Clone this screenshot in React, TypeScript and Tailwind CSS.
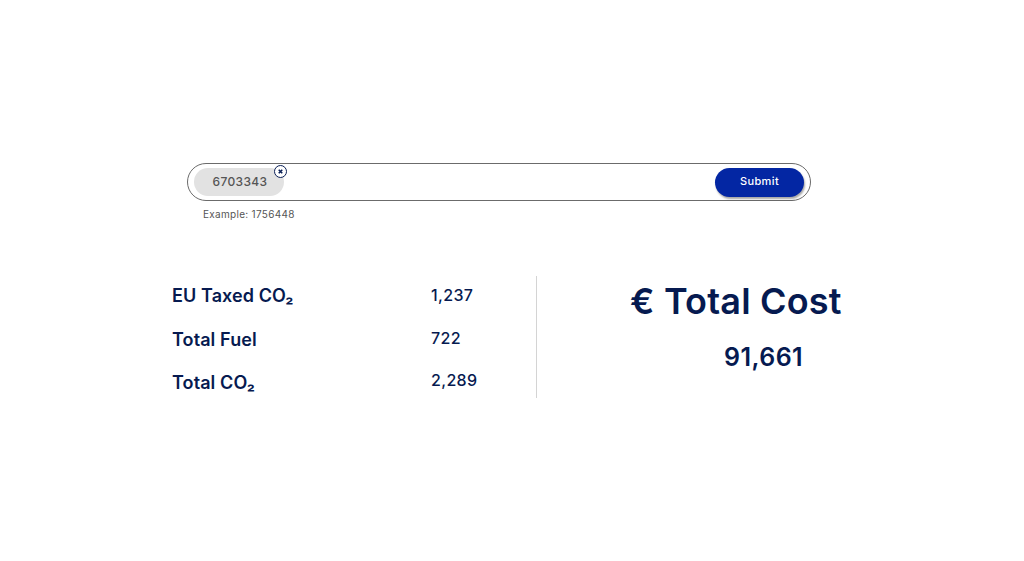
import React from 'react'

const labels = ['EU Taxed CO₂', 'Total Fuel', 'Total CO₂']
const values = ['1,237', '722', '2,289']

export default function App() {
  return (
    <div className="w-full h-[561px] bg-white overflow-hidden font-['Inter',sans-serif] text-[#061a50]">
      <div className="pt-[163px] pl-[187px]">
        <div className="w-[624px] h-[38px] rounded-full border border-[#6b6b6b] flex items-center justify-between pl-[6px] pr-[6px]">
          <div className="relative w-[90px] h-[28px] rounded-full bg-[#e2e2e2] flex items-center justify-center text-[12px] font-medium tracking-[0.35px] text-[#555555]">
            <span className="pl-[2px]">6703343</span>
            <span className="absolute -top-[3px] -right-[3px] w-[13px] h-[13px] rounded-full bg-white border-[1.5px] border-[#0a1f56] flex items-center justify-center">
              <svg width="7" height="7" viewBox="0 0 7 7">
                <path d="M1.75 1.75 5.25 5.25M5.25 1.75 1.75 5.25" stroke="#0a1f56" strokeWidth="1.6" />
              </svg>
            </span>
          </div>
          <button className="w-[89px] h-[29px] pb-[1px] rounded-full bg-[#0326a3] text-white text-[11px] font-medium tracking-[0.4px] shadow-[1px_2px_2px_rgba(0,0,0,0.35)]">
            Submit
          </button>
        </div>
        <div className="mt-[7px] ml-[16px] text-[10px] leading-[12px] tracking-[0.3px] text-[#555555]">Example: 1756448</div>
      </div>

      <div className="mt-[56px] flex items-start">
        <div className="ml-[172px] w-[365px] h-[122px] border-r border-[#d4d4d4] pt-[7px] flex">
          <div className="w-[259px] pt-[1px] flex flex-col gap-[19.5px]">
            {labels.map((label) => (
              <div key={label} className="h-[24px] leading-[24px] text-[18px] font-semibold tracking-[0.1px]">{label}</div>
            ))}
          </div>
          <div className="flex flex-col gap-[18.5px]">
            {values.map((value) => (
              <div key={value} className="h-[24px] leading-[24px] text-[16px] font-medium tracking-[0.35px]">{value}</div>
            ))}
          </div>
        </div>
        <div className="ml-[93px] pt-[1px]">
          <div className="text-[36px] leading-[48px] font-semibold tracking-[0.2px] whitespace-nowrap">€ Total Cost</div>
          <div className="mt-[16px] ml-[94px] text-[25px] leading-[32px] font-semibold tracking-[0.45px]">91,661</div>
        </div>
      </div>
    </div>
  )
}
